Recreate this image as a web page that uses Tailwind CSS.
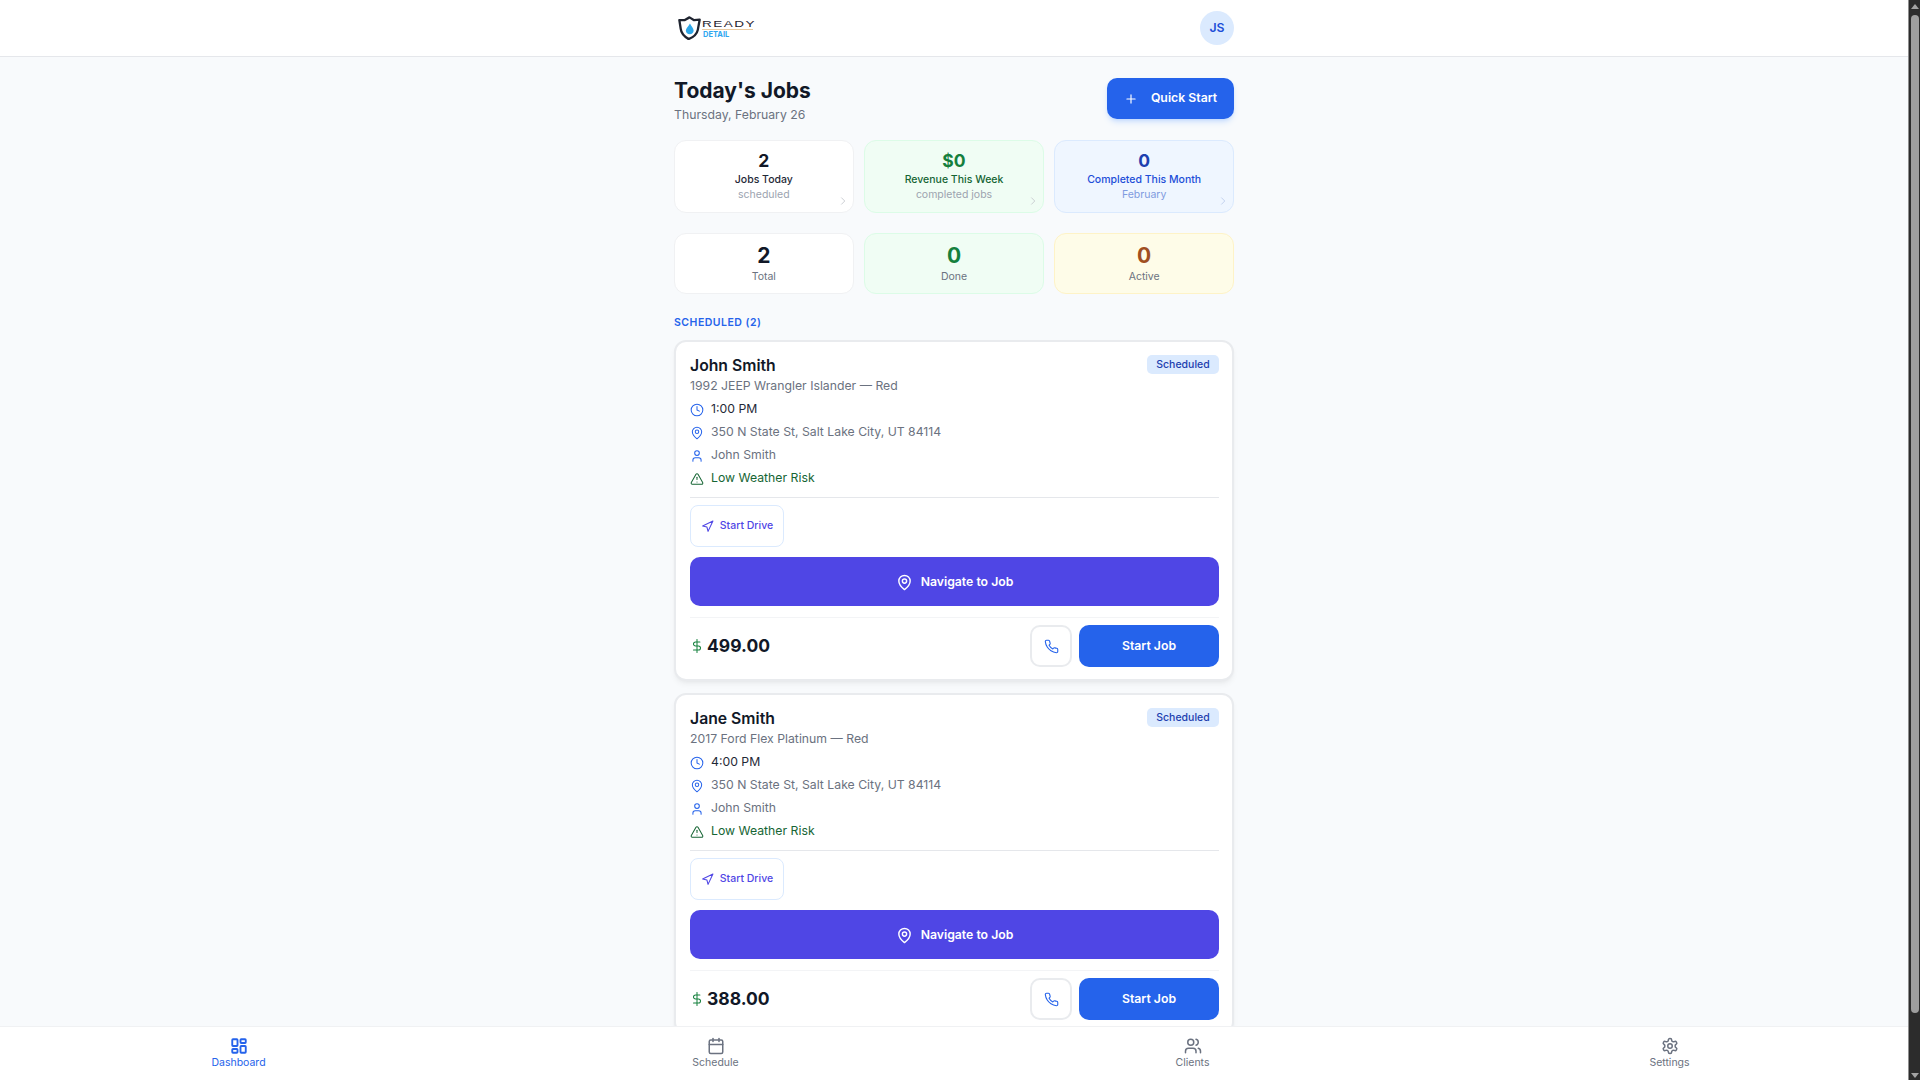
<!DOCTYPE html>
<html lang="en">
  <head>
    <meta charset="UTF-8" />
    <meta name="viewport" content="width=device-width, initial-scale=1.0" />
    <title>Today's Jobs</title>
    <script src="https://cdn.jsdelivr.net/npm/@tailwindcss/browser@4"></script>
  </head>
  <body class="bg-[#f8fafc] font-['Inter',sans-serif] text-[#111827]">
    <svg class="hidden">
      <symbol id="i-clock" viewBox="0 0 24 24"><circle cx="12" cy="12" r="10" /><polyline points="12 6 12 12 16 14" /></symbol>
      <symbol id="i-pin" viewBox="0 0 24 24"><path d="M20 10c0 6-8 12-8 12s-8-6-8-12a8 8 0 0 1 16 0Z" /><circle cx="12" cy="10" r="3" /></symbol>
      <symbol id="i-user" viewBox="0 0 24 24"><path d="M19 21v-2a4 4 0 0 0-4-4H9a4 4 0 0 0-4 4v2" /><circle cx="12" cy="7" r="4" /></symbol>
      <symbol id="i-alert" viewBox="0 0 24 24"><path d="m21.73 18-8-14a2 2 0 0 0-3.48 0l-8 14A2 2 0 0 0 4 21h16a2 2 0 0 0 1.73-3" /><path d="M12 9v4" /><path d="M12 17h.01" /></symbol>
      <symbol id="i-nav" viewBox="0 0 24 24"><polygon points="3 11 22 2 13 21 11 13 3 11" /></symbol>
      <symbol id="i-phone" viewBox="0 0 24 24"><path d="M22 16.92v3a2 2 0 0 1-2.18 2 19.79 19.79 0 0 1-8.63-3.07 19.5 19.5 0 0 1-6-6 19.79 19.79 0 0 1-3.07-8.67A2 2 0 0 1 4.11 2h3a2 2 0 0 1 2 1.72 12.84 12.84 0 0 0 .7 2.81 2 2 0 0 1-.45 2.11L8.09 9.91a16 16 0 0 0 6 6l1.27-1.27a2 2 0 0 1 2.11-.45 12.84 12.84 0 0 0 2.81.7A2 2 0 0 1 22 16.92z" /></symbol>
      <symbol id="i-dollar" viewBox="0 0 24 24"><line x1="12" x2="12" y1="1" y2="23" /><path d="M17 5H9.5a3.5 3.5 0 0 0 0 7h5a3.5 3.5 0 0 1 0 7H6" /></symbol>
      <symbol id="i-chevron" viewBox="0 0 24 24"><path d="m9 18 6-6-6-6" /></symbol>
    </svg>

    <div class="flex h-screen overflow-hidden">
      <div class="flex flex-col flex-1 min-w-0">
        <header class="h-[57px] shrink-0 bg-white border-b border-[#e5e7eb]">
          <div class="w-[560px] mx-auto h-full flex items-center justify-between">
            <!-- logo -->
            <div class="flex items-center ml-[4px]">
              <svg class="w-[23px] h-[24px]" viewBox="0 0 24 26">
                <path d="M12 1.5 17 4.5 23 4 21 15C20 20 16 23 11 25 6 22 3 19 2.500 14L1 4.500 6.500 4.500Z" fill="#fff" stroke="#1f2430" stroke-width="2.500" stroke-linejoin="round" />
                <path d="M12.500 8C14 11 16.500 13 16.500 16A4.300 4.300 0 0 1 8 16C8 13 11 11 12.500 8Z" fill="#2ea7e8" />
              </svg>
              <div class="ml-[1px] w-[51px] mt-[3px]">
                <div class="border-b border-[#e8c9a0] pb-px">
                  <div class="origin-left scale-x-[1.5] text-[9px] leading-[8px] font-['Liberation_Sans',sans-serif] text-[#1f2430] tracking-[1px] whitespace-nowrap">READY</div>
                </div>
                <div class="ml-px text-[7.5px] leading-[9px] font-bold text-[#2ea7f0]">DETAIL</div>
              </div>
            </div>
            <div class="w-[34px] h-[34px] rounded-full bg-[#dbeafe] flex items-center justify-center text-[12.25px] font-semibold text-[#1d4ed8]">JS</div>
          </div>
        </header>

        <main class="flex-1 min-h-0 overflow-hidden">
          <div class="w-[560px] mx-auto pt-[21px]">
            <div class="flex items-start justify-between">
              <div>
                <h1 class="mt-px text-[21px] leading-[24px] font-bold">Today's Jobs</h1>
                <p class="mt-[1.5px] text-[12.25px] leading-[20px] text-[#6b7280]">Thursday, February 26</p>
              </div>
              <button class="w-[127px] h-[41px] rounded-[10px] bg-[#2563eb] text-white text-[12.25px] font-semibold flex items-center justify-center gap-[13px] shadow-md shadow-blue-500/20">
                <svg class="w-[14px] h-[14px]" fill="none" stroke="currentColor" stroke-width="2" stroke-linecap="round" viewBox="0 0 24 24"><path d="M5 12h14" /><path d="M12 5v14" /></svg>
                Quick Start
              </button>
            </div>

            <div class="mt-[15.5px] grid grid-cols-3 gap-[10.5px]">
              <div class="relative h-[73px] rounded-[12px] bg-white border border-[#f0f1f3] text-center pt-[8px]">
                <div class="text-[17.5px] leading-[23px] font-bold">2</div>
                <div class="text-[10.5px] leading-[15px] font-medium text-[#1f2937]">Jobs Today</div>
                <div class="text-[10.5px] leading-[16px] text-[#9ca3af]">scheduled</div>
                <svg class="absolute right-[3px] bottom-[4px] w-[14px] h-[14px] text-[#c3c7cd]" fill="none" stroke="currentColor" stroke-width="1.500"><use href="#i-chevron" /></svg>
              </div>
              <div class="relative h-[73px] rounded-[12px] bg-[#f0fdf4] border border-[#dcfce7] text-center pt-[8px]">
                <div class="text-[17.5px] leading-[23px] font-bold text-[#15803d]">$0</div>
                <div class="text-[10.5px] leading-[15px] font-medium text-[#166534]">Revenue This Week</div>
                <div class="text-[10.5px] leading-[16px] text-[#9ca3af]">completed jobs</div>
                <svg class="absolute right-[3px] bottom-[4px] w-[14px] h-[14px] text-[#c3c7cd]" fill="none" stroke="currentColor" stroke-width="1.500"><use href="#i-chevron" /></svg>
              </div>
              <div class="relative h-[73px] rounded-[12px] bg-[#eff6ff] border border-[#dbeafe] text-center pt-[8px]">
                <div class="text-[17.5px] leading-[23px] font-bold text-[#1e40af]">0</div>
                <div class="text-[10.5px] leading-[15px] font-medium text-[#1d4ed8]">Completed This Month</div>
                <div class="text-[10.5px] leading-[16px] text-[#7f9be0]">February</div>
                <svg class="absolute right-[3px] bottom-[4px] w-[14px] h-[14px] text-[#bccbea]" fill="none" stroke="currentColor" stroke-width="1.500"><use href="#i-chevron" /></svg>
              </div>
            </div>

            <div class="mt-[20px] grid grid-cols-3 gap-[10.5px]">
              <div class="h-[61px] rounded-[12px] bg-white border border-[#f0f1f3] text-center pt-[8px]">
                <div class="text-[21px] leading-[27px] font-bold">2</div>
                <div class="text-[10.5px] leading-[16px] text-[#6b7280]">Total</div>
              </div>
              <div class="h-[61px] rounded-[12px] bg-[#f0fdf4] border border-[#dcfce7] text-center pt-[8px]">
                <div class="text-[21px] leading-[27px] font-bold text-[#15803d]">0</div>
                <div class="text-[10.5px] leading-[16px] text-[#6b7280]">Done</div>
              </div>
              <div class="h-[61px] rounded-[12px] bg-[#fefce8] border border-[#fef3c7] text-center pt-[8px]">
                <div class="text-[21px] leading-[27px] font-bold text-[#a04f1f]">0</div>
                <div class="text-[10.5px] leading-[16px] text-[#6b7280]">Active</div>
              </div>
            </div>

            <h2 class="mt-[21px] mb-[9px] text-[10.5px] leading-[16px] font-semibold tracking-[0.5px] text-[#2563eb]">SCHEDULED (2)</h2>

            <div class="flex flex-col gap-3">
              <article class="h-[341px] rounded-[12px] bg-white border-2 border-[#e9ebee] shadow-md shadow-black/5 pl-[14px] pr-[13px] pt-[13px]">
                <div class="h-[20px] flex items-start justify-between">
                  <h3 class="mt-px text-[15.75px] leading-[20px] font-semibold">John Smith</h3>
                  <span class="h-[19px] w-[72px] rounded-[5px] bg-[#dbeafe] flex items-center justify-center text-[10.5px] font-medium text-[#1e40af]">Scheduled</span>
                </div>
                <p class="mt-[0.5px] text-[12.25px] leading-[20px] text-[#6b7280]">1992 JEEP Wrangler Islander — Red</p>
                <ul class="mt-[2.5px] text-[12.25px]">
                  <li class="h-[23px] flex items-center gap-[7px] text-[#1f2937]"><svg class="w-[14px] h-[14px] text-[#2563eb]" fill="none" stroke="currentColor" stroke-width="1.750" stroke-linecap="round" stroke-linejoin="round"><use href="#i-clock" /></svg>1:00 PM</li>
                  <li class="h-[23px] flex items-center gap-[7px] text-[#6b7280]"><svg class="w-[14px] h-[14px] text-[#2563eb]" fill="none" stroke="currentColor" stroke-width="1.750" stroke-linecap="round" stroke-linejoin="round"><use href="#i-pin" /></svg>350 N State St, Salt Lake City, UT 84114</li>
                  <li class="h-[23px] flex items-center gap-[7px] text-[#6b7280]"><svg class="w-[14px] h-[14px] text-[#2563eb]" fill="none" stroke="currentColor" stroke-width="1.750" stroke-linecap="round" stroke-linejoin="round"><use href="#i-user" /></svg>John Smith</li>
                  <li class="h-[23px] flex items-center gap-[7px] text-[#166534]"><svg class="w-[14px] h-[14px]" fill="none" stroke="currentColor" stroke-width="1.750" stroke-linecap="round" stroke-linejoin="round"><use href="#i-alert" /></svg>Low Weather Risk</li>
                </ul>
                <div class="mt-[7px] pt-[7px] border-t border-[#e5e7eb]">
                  <button class="w-[94px] h-[42px] rounded-[8px] bg-white border border-[#dbeafe] flex items-center justify-center gap-[6px] text-[10.5px] font-medium text-[#4f46e5]">
                    <svg class="w-[13px] h-[13px]" fill="none" stroke="currentColor" stroke-width="2" stroke-linecap="round" stroke-linejoin="round"><use href="#i-nav" /></svg>
                    Start Drive
                  </button>
                </div>
                <button class="mt-[10px] w-full h-[49px] pt-px rounded-[10px] bg-[#4f46e5] text-white text-[12.25px] font-semibold flex items-center justify-center gap-[8px]">
                  <svg class="w-[17px] h-[17px]" fill="none" stroke="currentColor" stroke-width="2" stroke-linecap="round" stroke-linejoin="round"><use href="#i-pin" /></svg>
                  Navigate to Job
                </button>
                <div class="mt-[11px] pt-[7px] border-t border-[#f3f4f6] flex items-center justify-between">
                  <div class="flex items-center gap-[3px]">
                    <svg class="w-[14px] h-[14px] text-[#15803d]" fill="none" stroke="currentColor" stroke-width="1.750" stroke-linecap="round" stroke-linejoin="round"><use href="#i-dollar" /></svg>
                    <span class="text-[17.5px] font-bold">499.00</span>
                  </div>
                  <div class="flex items-center gap-[7px]">
                    <button class="w-[42px] h-[42px] rounded-[10px] bg-white border-2 border-[#e9ebee] flex items-center justify-center text-[#2563eb]">
                      <svg class="w-[15px] h-[15px]" fill="none" stroke="currentColor" stroke-width="1.750" stroke-linecap="round" stroke-linejoin="round"><use href="#i-phone" /></svg>
                    </button>
                    <button class="w-[140px] h-[42px] rounded-[10px] bg-[#2563eb] text-white text-[12.25px] font-semibold">Start Job</button>
                  </div>
                </div>
              </article>

              <article class="h-[341px] rounded-[12px] bg-white border-2 border-[#e9ebee] shadow-md shadow-black/5 pl-[14px] pr-[13px] pt-[13px]">
                <div class="h-[20px] flex items-start justify-between">
                  <h3 class="mt-px text-[15.75px] leading-[20px] font-semibold">Jane Smith</h3>
                  <span class="h-[19px] w-[72px] rounded-[5px] bg-[#dbeafe] flex items-center justify-center text-[10.5px] font-medium text-[#1e40af]">Scheduled</span>
                </div>
                <p class="mt-[0.5px] text-[12.25px] leading-[20px] text-[#6b7280]">2017 Ford Flex Platinum — Red</p>
                <ul class="mt-[2.5px] text-[12.25px]">
                  <li class="h-[23px] flex items-center gap-[7px] text-[#1f2937]"><svg class="w-[14px] h-[14px] text-[#2563eb]" fill="none" stroke="currentColor" stroke-width="1.750" stroke-linecap="round" stroke-linejoin="round"><use href="#i-clock" /></svg>4:00 PM</li>
                  <li class="h-[23px] flex items-center gap-[7px] text-[#6b7280]"><svg class="w-[14px] h-[14px] text-[#2563eb]" fill="none" stroke="currentColor" stroke-width="1.750" stroke-linecap="round" stroke-linejoin="round"><use href="#i-pin" /></svg>350 N State St, Salt Lake City, UT 84114</li>
                  <li class="h-[23px] flex items-center gap-[7px] text-[#6b7280]"><svg class="w-[14px] h-[14px] text-[#2563eb]" fill="none" stroke="currentColor" stroke-width="1.750" stroke-linecap="round" stroke-linejoin="round"><use href="#i-user" /></svg>John Smith</li>
                  <li class="h-[23px] flex items-center gap-[7px] text-[#166534]"><svg class="w-[14px] h-[14px]" fill="none" stroke="currentColor" stroke-width="1.750" stroke-linecap="round" stroke-linejoin="round"><use href="#i-alert" /></svg>Low Weather Risk</li>
                </ul>
                <div class="mt-[7px] pt-[7px] border-t border-[#e5e7eb]">
                  <button class="w-[94px] h-[42px] rounded-[8px] bg-white border border-[#dbeafe] flex items-center justify-center gap-[6px] text-[10.5px] font-medium text-[#4f46e5]">
                    <svg class="w-[13px] h-[13px]" fill="none" stroke="currentColor" stroke-width="2" stroke-linecap="round" stroke-linejoin="round"><use href="#i-nav" /></svg>
                    Start Drive
                  </button>
                </div>
                <button class="mt-[10px] w-full h-[49px] pt-px rounded-[10px] bg-[#4f46e5] text-white text-[12.25px] font-semibold flex items-center justify-center gap-[8px]">
                  <svg class="w-[17px] h-[17px]" fill="none" stroke="currentColor" stroke-width="2" stroke-linecap="round" stroke-linejoin="round"><use href="#i-pin" /></svg>
                  Navigate to Job
                </button>
                <div class="mt-[11px] pt-[7px] border-t border-[#f3f4f6] flex items-center justify-between">
                  <div class="flex items-center gap-[3px]">
                    <svg class="w-[14px] h-[14px] text-[#15803d]" fill="none" stroke="currentColor" stroke-width="1.750" stroke-linecap="round" stroke-linejoin="round"><use href="#i-dollar" /></svg>
                    <span class="text-[17.5px] font-bold">388.00</span>
                  </div>
                  <div class="flex items-center gap-[7px]">
                    <button class="w-[42px] h-[42px] rounded-[10px] bg-white border-2 border-[#e9ebee] flex items-center justify-center text-[#2563eb]">
                      <svg class="w-[15px] h-[15px]" fill="none" stroke="currentColor" stroke-width="1.750" stroke-linecap="round" stroke-linejoin="round"><use href="#i-phone" /></svg>
                    </button>
                    <button class="w-[140px] h-[42px] rounded-[10px] bg-[#2563eb] text-white text-[12.25px] font-semibold">Start Job</button>
                  </div>
                </div>
              </article>
            </div>
          </div>
        </main>

        <nav class="h-[54px] shrink-0 bg-white border-t border-[#f0f1f3] grid grid-cols-4 text-[10.5px]">
          <a class="flex flex-col items-center pt-[10px] text-[#2563eb]">
            <svg class="w-[18px] h-[18px]" fill="none" stroke="currentColor" stroke-width="2.500" viewBox="0 0 24 24"><rect width="7" height="9" x="3" y="3" rx="1" /><rect width="7" height="5" x="14" y="3" rx="1" /><rect width="7" height="9" x="14" y="12" rx="1" /><rect width="7" height="5" x="3" y="16" rx="1" /></svg>
            <span class="leading-[16px]">Dashboard</span>
          </a>
          <a class="flex flex-col items-center pt-[10px] text-[#6b7280]">
            <svg class="w-[18px] h-[18px]" fill="none" stroke="currentColor" stroke-width="2" stroke-linecap="round" viewBox="0 0 24 24"><path d="M8 2v4" /><path d="M16 2v4" /><rect width="18" height="18" x="3" y="4" rx="2" /><path d="M3 10h18" /></svg>
            <span class="leading-[16px]">Schedule</span>
          </a>
          <a class="flex flex-col items-center pt-[10px] text-[#6b7280]">
            <svg class="w-[18px] h-[18px]" fill="none" stroke="currentColor" stroke-width="2" stroke-linecap="round" viewBox="0 0 24 24"><path d="M16 21v-2a4 4 0 0 0-4-4H6a4 4 0 0 0-4 4v2" /><circle cx="9" cy="7" r="4" /><path d="M22 21v-2a4 4 0 0 0-3-3.870" /><path d="M16 3.130a4 4 0 0 1 0 7.750" /></svg>
            <span class="leading-[16px]">Clients</span>
          </a>
          <a class="flex flex-col items-center pt-[10px] text-[#6b7280]">
            <svg class="w-[18px] h-[18px]" fill="none" stroke="currentColor" stroke-width="2" viewBox="0 0 24 24"><path d="M12.220 2h-.44a2 2 0 0 0-2 2v.18a2 2 0 0 1-1 1.730l-.43.25a2 2 0 0 1-2 0l-.15-.08a2 2 0 0 0-2.730.73l-.22.38a2 2 0 0 0 .73 2.730l.15.1a2 2 0 0 1 1 1.720v.51a2 2 0 0 1-1 1.740l-.15.09a2 2 0 0 0-.73 2.730l.22.38a2 2 0 0 0 2.730.73l.15-.08a2 2 0 0 1 2 0l.43.25a2 2 0 0 1 1 1.730V20a2 2 0 0 0 2 2h.44a2 2 0 0 0 2-2v-.18a2 2 0 0 1 1-1.730l.43-.25a2 2 0 0 1 2 0l.15.08a2 2 0 0 0 2.730-.73l.22-.39a2 2 0 0 0-.73-2.730l-.15-.08a2 2 0 0 1-1-1.740v-.5a2 2 0 0 1 1-1.740l.15-.09a2 2 0 0 0 .73-2.730l-.22-.38a2 2 0 0 0-2.730-.73l-.15.08a2 2 0 0 1-2 0l-.43-.25a2 2 0 0 1-1-1.730V4a2 2 0 0 0-2-2z" /><circle cx="12" cy="12" r="3" /></svg>
            <span class="leading-[16px]">Settings</span>
          </a>
        </nav>
      </div>

      <!-- scrollbar -->
      <div class="w-[12px] shrink-0 bg-[#2c2c2c] border-l border-[#8f8f8f] pl-px flex flex-col items-center pt-[4px] pb-[2px]">
        <div class="w-0 h-0 border-x-[4px] border-x-transparent border-b-[5px] border-b-[#a3a3a3]"></div>
        <div class="mt-[6px] w-[8px] h-[998px] rounded-[4px] bg-[#9e9e9e]"></div>
        <div class="mt-auto w-0 h-0 border-x-[4px] border-x-transparent border-t-[5px] border-t-[#a3a3a3]"></div>
      </div>
    </div>
  </body>
</html>
